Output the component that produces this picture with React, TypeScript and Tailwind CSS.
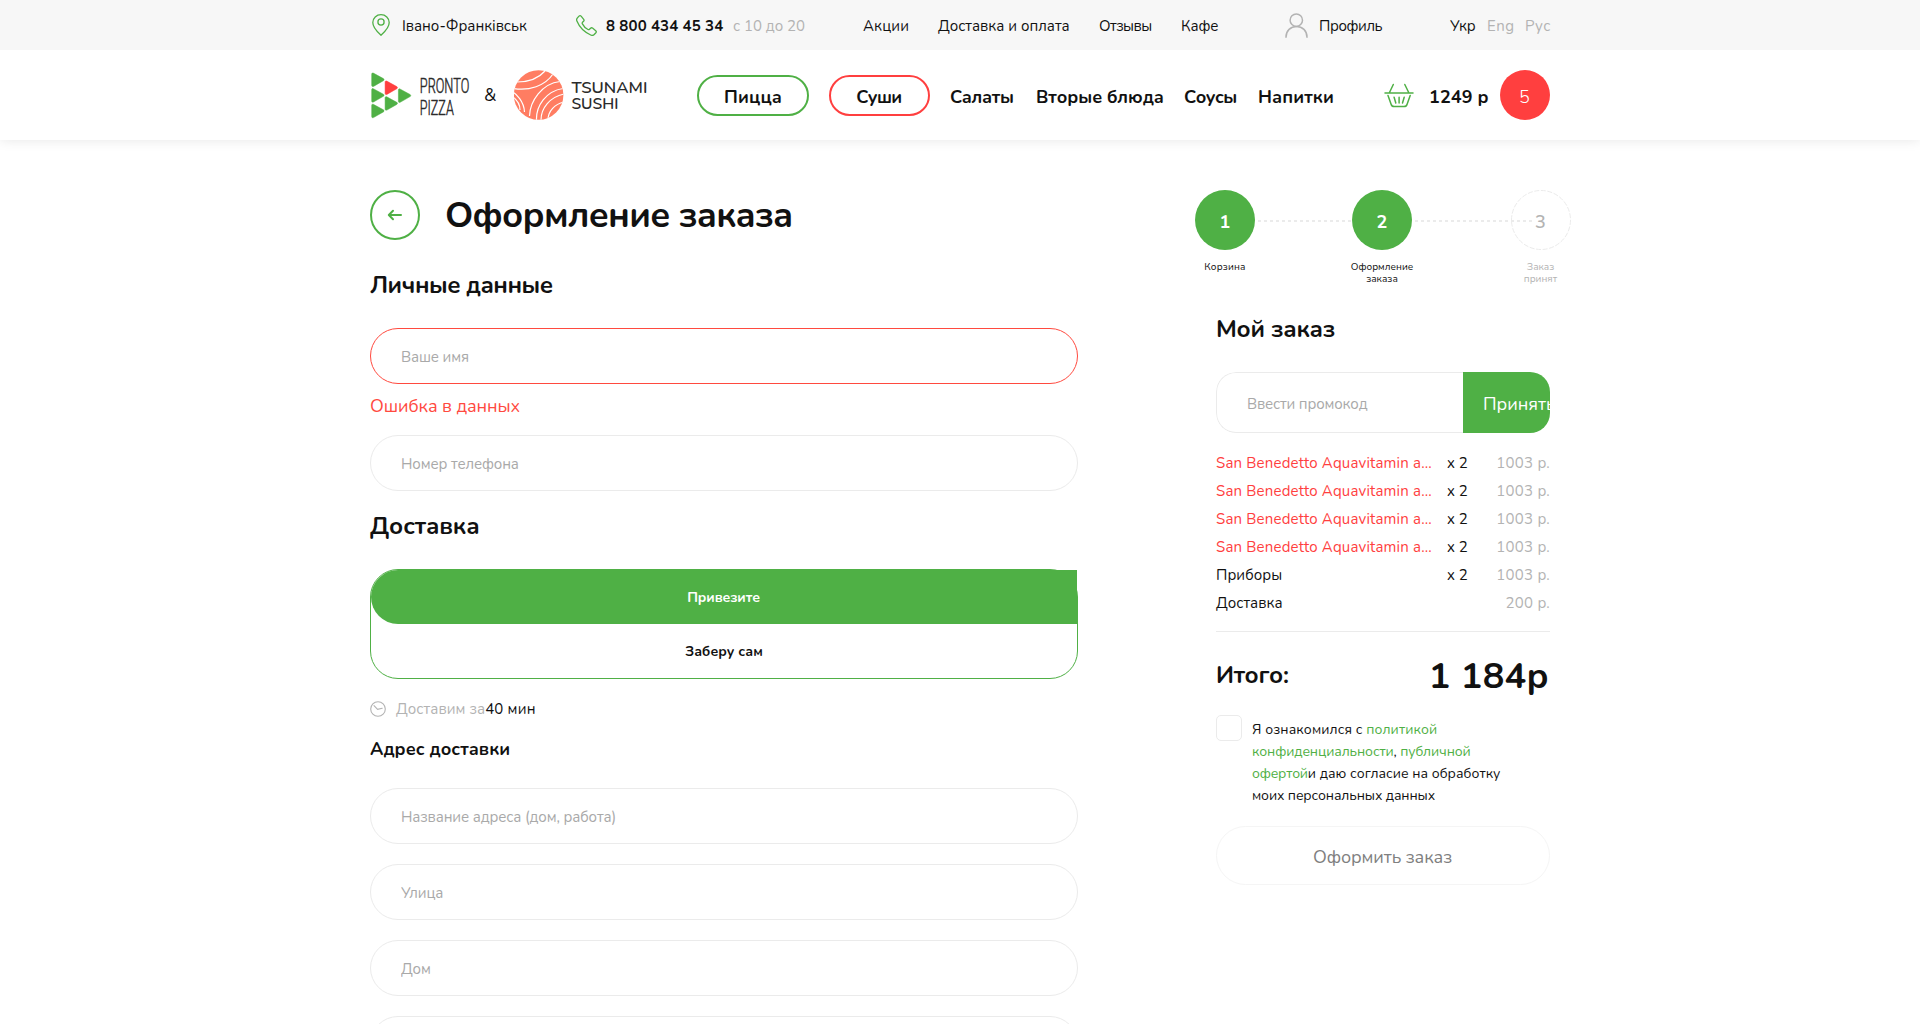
import React from "react";

const items = [1, 2, 3, 4].map((id) => ({
  id,
  name: "San Benedetto Aquavitamin a...",
  qty: "x 2",
  price: "1003 р.",
}));

function PinIcon() {
  return (
    <svg width="18" height="22" viewBox="0 0 18 22" fill="none" stroke="#4fb045" strokeWidth="1.3" className="shrink-0">
      <path d="M9 21.2C8.2 20.4 .8 14.6 .8 8.6A8.2 7.9 0 0 1 17.2 8.6C17.2 14.6 9.8 20.4 9 21.2Z" strokeLinejoin="round" />
      <circle cx="9" cy="8" r="3.1" />
    </svg>
  );
}

function PhoneIcon() {
  return (
    <svg width="21" height="21" viewBox="0 0 21 21" fill="none" stroke="#4fb045" strokeWidth="1.3" strokeLinejoin="round" className="shrink-0">
      <path d="M1.2 3.2 3 1.1C3.6.5 4.5.5 5.1 1.1L7.7 4.3C8.2 4.9 8.1 5.7 7.6 6.2L6.5 7.3C6.1 7.8 6.1 8.4 6.4 8.9 7.6 11.3 9.6 13.3 12 14.5 12.5 14.8 13.1 14.7 13.5 14.3L14.6 13.2C15.1 12.7 16 12.7 16.5 13.1L19.7 15.7C20.3 16.2 20.4 17.1 19.9 17.7L18.2 19.5C17.3 20.4 15.9 20.6 14.7 20 9.1 17.5 3.4 12.2.9 6.1.5 5.1.5 4 1.2 3.2Z" />
    </svg>
  );
}

function UserIcon() {
  return (
    <svg width="23" height="25" viewBox="0 0 23 25" fill="none" stroke="#b3b3b3" strokeWidth="1.5" className="shrink-0">
      <circle cx="11.3" cy="7.2" r="6.2" />
      <path d="M1 24.2C1 17.8 5.6 13.4 11.5 13.4S22 17.8 22 24.2" strokeLinecap="round" />
    </svg>
  );
}

function BasketIcon() {
  return (
    <svg width="30" height="25" viewBox="0 0 30 25" fill="none" stroke="#4fb045" strokeWidth="1.5" strokeLinecap="round" className="shrink-0">
      <path d="M1 10H29M5.5 9.5 9.3 1.5M24.7 9.5 20.8 1.5" />
      <path d="M4 12.5 7.1 21.2C7.5 22.8 8.6 23.6 10.2 23.6H20C21.6 23.6 22.7 22.8 23.1 21.2L26.2 12.5" />
      <path d="M10.1 14.3 11.8 20M15.1 14.3V20M20.2 14.3 18.5 20" />
    </svg>
  );
}

function ClockIcon() {
  return (
    <svg width="16" height="16" viewBox="0 0 16 16" fill="none" stroke="#b3b3b3" strokeWidth="1.1" className="shrink-0">
      <circle cx="8" cy="8" r="7.3" />
      <path d="M4 4.6 7.6 8.3 12.2 7.2" strokeLinecap="round" />
    </svg>
  );
}

const tri = "M1.7.3 11.8 5.8C12.7 6.4 12.7 7.4 11.8 7.9L1.9 13.6C.9 14 .1 13.6.1 12.5V1.4C.1.3.9-.1 1.7.3Z";

function PizzaLogo() {
  return (
    <svg width="100" height="48" viewBox="0 0 100 48" className="shrink-0 overflow-visible">
      <g fill="#4fb045" stroke="#4fb045" strokeWidth=".5">
        <path d={tri} transform="translate(1.6 1.8)" />
        <path d={tri} transform="translate(1.6 17.4)" />
        <path d={tri} transform="translate(1.6 33)" />
        <path d={tri} transform="translate(15 25.5)" />
        <path d={tri} transform="translate(28.3 17.7)" />
      </g>
      <path d={tri} transform="translate(15 9.8)" fill="#ff3f3f" stroke="#ff3f3f" strokeWidth=".5" />
      <g fill="#2b2b2b" stroke="#2b2b2b" strokeWidth=".5" fontFamily="Roboto, sans-serif" fontSize="20" fontWeight="300">
        <text x="49.8" y="22.3" textLength="49.5" lengthAdjust="spacingAndGlyphs">PRONTO</text>
        <text x="49.8" y="44.1" textLength="34" lengthAdjust="spacingAndGlyphs">PIZZA</text>
      </g>
    </svg>
  );
}

function SushiLogo() {
  return (
    <svg width="136" height="50" viewBox="0 0 136 50" className="shrink-0 overflow-visible">
      <clipPath id="ball">
        <circle cx="24.6" cy="25" r="24.8" />
      </clipPath>
      <g clipPath="url(#ball)">
        <rect width="50" height="50" fill="#ff7d62" />
        <g fill="none" stroke="#fff" strokeWidth="1.2">
          <path d="M3 12C14 12 24 9 31 1" />
          <path d="M0 18.6C15 21 31 16 39 4" />
          <path d="M-1 22C2 24 10 31 10.5 42" />
          <path d="M-1 27C3 30 6 34 6 40" />
          <path d="M15.5 46C16 31 28 13.5 46 11.5" />
          <path d="M22.5 50C22 36 32 21 49 18.5" />
          <path d="M27 50C27 38 36 27 50 24" />
          <path d="M34 50C34 41 41 34 50 32" />
        </g>
      </g>
      <g fill="#2b2b2b" fontFamily="Nunito, Lato, sans-serif" fontSize="16.5" fontWeight="600">
        <text x="57.4" y="22.8" textLength="76" lengthAdjust="spacingAndGlyphs">TSUNAMI</text>
        <text x="57.4" y="38.8" textLength="47" lengthAdjust="spacingAndGlyphs">SUSHI</text>
      </g>
    </svg>
  );
}

function TopBar() {
  return (
    <div className="relative z-10 h-[50px] bg-[#f7f7f7]">
      <div className="mx-auto flex h-full w-[1180px] items-center text-[15px]">
        <div className="flex w-[206px] shrink-0 items-center pl-[2px]">
          <PinIcon />
          <span className="ml-3 pt-[1px] leading-5 tracking-[-0.03px]">Івано-Франківськ</span>
        </div>
        <div className="flex w-[286px] shrink-0 items-center">
          <PhoneIcon />
          <span className="ml-[9px] w-[127px] whitespace-nowrap pt-[1px] font-bold leading-5 tracking-[0.14px]">8 800 434 45 34</span>
          <span className="pt-[1px] leading-5 text-[#b3b3b3]">с 10 до 20</span>
        </div>
        <nav className="flex w-[423px] shrink-0 items-center whitespace-nowrap pl-[1px] pt-[1px] leading-5">
          <a className="w-[75px] tracking-[0.15px]">Акции</a>
          <a className="w-[161px] tracking-[0.02px]">Доставка и оплата</a>
          <a className="w-[82px] tracking-[-0.5px]">Отзывы</a>
          <a className="tracking-[-0.1px]">Кафе</a>
        </nav>
        <div className="flex w-[163px] shrink-0 items-center">
          <UserIcon />
          <span className="ml-[11px] pt-[1px] leading-5 tracking-[-0.4px]">Профиль</span>
        </div>
        <div className="flex flex-1 items-center pl-[2px] pt-[1px] leading-5 text-[#b3b3b3]">
          <span className="w-[37px] text-[#111]">Укр</span>
          <span className="w-[38px] tracking-[0.5px]">Eng</span>
          <span className="tracking-[0.5px]">Рус</span>
        </div>
      </div>
    </div>
  );
}

function Header() {
  return (
    <header className="h-[90px] bg-white shadow-[0_0_12px_rgba(0,0,0,0.1)]">
      <div className="mx-auto flex h-full w-[1180px] items-center whitespace-nowrap text-[18px] font-bold">
        <div className="flex w-[327px] shrink-0 items-center">
          <PizzaLogo />
          <span className="-mt-px ml-[14px] w-[30px] text-[18px] font-normal leading-6">&amp;</span>
          <SushiLogo />
        </div>
        <a className="flex h-[41px] w-[112px] shrink-0 items-center justify-center rounded-full border-2 border-[#4fb045] pt-[4px] tracking-[0.2px]">Пицца</a>
        <a className="ml-5 flex h-[41px] w-[101px] shrink-0 items-center justify-center rounded-full border-2 border-[#ff3f3f] pr-px pt-[4px] tracking-[-0.5px]">Суши</a>
        <nav className="ml-[20px] flex w-[433px] shrink-0 pt-[5px]">
          <a className="w-[86px] tracking-[-0.3px]">Салаты</a>
          <a className="w-[148px] tracking-[-0.05px]">Вторые блюда</a>
          <a className="w-[74px] tracking-[-0.4px]">Соусы</a>
          <a className="tracking-[0.1px]">Напитки</a>
        </nav>
        <div className="flex flex-1 items-center pl-[1px]">
          <BasketIcon />
          <span className="ml-[15px] pt-[5px] tracking-[0.1px]">1249 р</span>
          <span className="ml-auto flex size-[50px] items-center justify-center rounded-full bg-[#ff3f3f] pr-px pt-[4px] font-light text-white">5</span>
        </div>
      </div>
    </header>
  );
}

function Field({ label, error = false }: { label: string; error?: boolean }) {
  return (
    <input
      placeholder={label}
      className={
        "block h-14 w-full rounded-[28px] border bg-white px-[30px] pt-[2px] text-[15px] tracking-[-0.12px] outline-none placeholder:text-[#a9a9a9] " +
        (error ? "border-[#ff4a3f]" : "border-[#ebebeb]")
      }
    />
  );
}

function CheckoutForm() {
  return (
    <main className="w-[708px] shrink-0 pt-[50px]">
      <div className="flex items-center">
        <button className="flex size-[50px] items-center justify-center rounded-full border-2 border-[#4fb045]">
          <svg width="16" height="12" viewBox="0 0 16 12" fill="none" stroke="#4fb045" strokeWidth="2" strokeLinecap="round" strokeLinejoin="round">
            <path d="M14 6H2M6 1.8 1.8 6 6 10.2" />
          </svg>
        </button>
        <h1 className="-mb-px ml-[25px] mt-px text-[36px] font-bold leading-[50px] tracking-[-0.7px]">Оформление заказа</h1>
      </div>
      <h2 className="mt-[29px] text-[24px] font-bold leading-8 tracking-[-0.48px]">Личные данные</h2>
      <div className="mt-[27px]">
        <Field label="Ваше имя" error />
      </div>
      <p className="mt-[10px] text-[18px] leading-6 tracking-[-0.09px] text-[#ff4a3f]">Ошибка в данных</p>
      <div className="mt-[17px]">
        <Field label="Номер телефона" />
      </div>
      <h2 className="mt-[19px] text-[24px] font-bold leading-8 tracking-[-0.1px]">Доставка</h2>
      <div className="mt-[27px] h-[110px] rounded-[28px] border border-[#4fb045] text-center text-[14px] font-bold leading-[54px]">
        <div className="h-[54px] rounded-l-[28px] bg-[#4fb045] pr-px pt-px tracking-[-0.1px] text-white">Привезите</div>
        <div className="h-[54px] pt-px tracking-[0.08px]">Заберу сам</div>
      </div>
      <div className="mt-[19px] flex items-center text-[15px] leading-5">
        <ClockIcon />
        <span className="ml-[10px] pt-px tracking-[0.08px] text-[#b3b3b3]">Доставим за</span>
        <span className="pt-px tracking-[0.2px]">40 мин</span>
      </div>
      <h3 className="mt-[18px] text-[18px] font-bold leading-6 tracking-[0.05px]">Адрес доставки</h3>
      <div className="mt-[27px] flex flex-col gap-5">
        <Field label="Название адреса (дом, работа)" />
        <Field label="Улица" />
        <Field label="Дом" />
        <Field label="Квартира" />
      </div>
    </main>
  );
}

function Steps() {
  return (
    <div className="-ml-[21px] flex w-[376px] items-start text-center text-[10px] leading-3">
      <div className="w-[60px] shrink-0">
        <div className="flex size-[60px] items-center justify-center rounded-full bg-[#4fb045] pt-1 text-[18px] font-bold text-white">1</div>
        <p className="mt-[11px] tracking-[0.2px]">Корзина</p>
      </div>
      <Dashes className="ml-[3px] w-[94px]" />
      <div className="w-[60px] shrink-0">
        <div className="flex size-[60px] items-center justify-center rounded-full bg-[#4fb045] pt-1 text-[18px] font-bold text-white">2</div>
        <p className="-mx-2 mt-[11px] tracking-[0.05px]">
          Оформление
          <br />
          заказа
        </p>
      </div>
      <Dashes className="ml-[3px] w-[117px]" />
      <div className="-ml-[21px] w-[60px] shrink-0 text-[#b3b3b3]">
        <div className="relative flex size-[60px] items-center justify-center pr-px pt-1 text-[18px] font-semibold">
          <svg className="absolute inset-0" width="60" height="60" viewBox="0 0 60 60" fill="none" stroke="#ebebeb">
            <circle cx="30" cy="30" r="29.5" strokeDasharray="5 1.6" />
          </svg>
          3
        </div>
        <p className="mt-[11px] pr-px">
          Заказ
          <br />
          принят
        </p>
      </div>
    </div>
  );
}

function Dashes({ className }: { className: string }) {
  return (
    <div className={"mt-[30px] h-[2px] shrink-0 bg-[repeating-linear-gradient(90deg,#ebebeb_0_3px,transparent_3px_6px)] " + className} />
  );
}

function OrderRow({ name, qty, price, hot = false }: { name: string; qty?: string; price: string; hot?: boolean }) {
  return (
    <li className="flex h-7 items-center whitespace-nowrap">
      <span className={"w-[218px] " + (hot ? "tracking-[0.18px] text-[#ff3f3f]" : "tracking-[0.05px]")}>{name}</span>
      <span className="ml-[13px] w-[30px]">{qty}</span>
      <span className="ml-auto tracking-[0.25px] text-[#b3b3b3]">{price}</span>
    </li>
  );
}

function Summary() {
  return (
    <aside className="ml-[138px] w-[334px] shrink-0 pt-[50px]">
      <Steps />
      <h2 className="mt-[28px] text-[24px] font-bold leading-8 tracking-[-0.25px]">Мой заказ</h2>
      <div className="mt-[27px] flex h-[61px] overflow-hidden rounded-[20px] bg-white">
        <input
          placeholder="Ввести промокод"
          className="h-full w-[247px] shrink-0 rounded-l-[20px] border border-r-0 border-[#ebebeb] pl-[30px] pt-[3px] text-[15px] tracking-[-0.15px] outline-none placeholder:text-[#a9a9a9]"
        />
        <button className="flex h-full w-[110px] shrink-0 items-center bg-[#4fb045] pl-5 pt-[3px] text-[18px] text-white">Принять</button>
      </div>
      <ul className="mt-4 text-[15px]">
        {items.map((item) => (
          <OrderRow key={item.id} name={item.name} qty={item.qty} price={item.price} hot />
        ))}
        <OrderRow name="Приборы" qty="x 2" price="1003 р." />
        <OrderRow name="Доставка" price="200 р." />
      </ul>
      <div className="mt-[14px] border-t border-[#ebebeb]" />
      <div className="mt-[19px] flex h-[50px] items-center justify-between font-bold">
        <span className="-mt-[2px] text-[24px] leading-8 tracking-[-0.3px]">Итого:</span>
        <span className="pr-px pt-[1px] text-[36px] leading-[48px] tracking-[0.35px]">1 184р</span>
      </div>
      <div className="mt-[14px] flex">
        <span className="size-[26px] shrink-0 rounded-[5px] border border-[#ebebeb]" />
        <p className="ml-[10px] mt-[4px] whitespace-nowrap text-[14px] leading-[22px] tracking-[-0.12px]">
          <span className="tracking-[0.12px]">Я ознакомился с </span>
          <a className="tracking-[0.1px] text-[#4fb045]">политикой</a>
          <br />
          <a className="text-[#4fb045]">конфиденциальности</a>, <a className="text-[#4fb045]">публичной</a>
          <br />
          <a className="tracking-[-0.2px] text-[#4fb045]">офертой</a>
          <span className="tracking-[0.03px]">и даю согласие на обработку</span>
          <br />
          моих персональных данных
        </p>
      </div>
      <button className="mt-[19px] flex h-[59px] w-full items-center justify-center rounded-[30px] border border-[#f5f5f5] pr-px pt-[3px] text-[18px] tracking-[-0.1px] text-[#808080]">
        Оформить заказ
      </button>
    </aside>
  );
}

export default function App() {
  return (
    <div className="h-screen overflow-hidden bg-white font-[Nunito,'Open_Sans',sans-serif] text-[#111]">
      <TopBar />
      <Header />
      <div className="mx-auto flex w-[1180px]">
        <CheckoutForm />
        <Summary />
      </div>
    </div>
  );
}
